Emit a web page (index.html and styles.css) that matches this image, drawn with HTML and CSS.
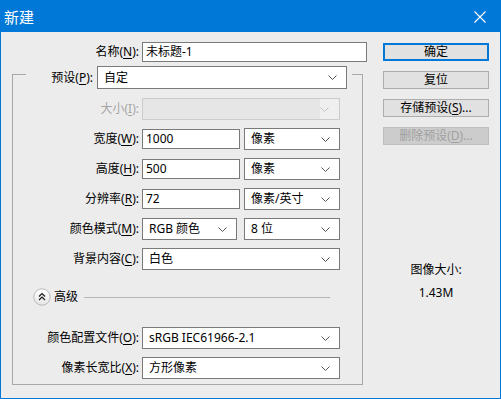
FILE: index.html
```html
<!DOCTYPE html>
<html lang="zh-CN">
<head>
<meta charset="utf-8">
<title>新建</title>
<link rel="stylesheet" href="styles.css">
</head>
<body>
<div class="win">
  <div class="titlebar">
    <span class="title">新建</span>
    <svg class="close" width="12" height="12" viewBox="0 0 12 12"><path d="M0.5 0.5 L11.5 11.5 M11.5 0.5 L0.5 11.5" stroke="#fff" stroke-width="1.1" fill="none"/></svg>
  </div>
  <div class="content">
    <div class="left">
      <div class="row name-row">
        <span class="lbl lbl-name">名称(<u>N</u>):</span>
        <div class="input w-name">未标题-1</div>
      </div>
      <div class="group">
        <div class="legend-row">
          <span class="lbl-preset">预设(<u>P</u>):</span>
          <div class="select w-preset"><span>自定</span><svg class="chev" width="9" height="5" viewBox="0 0 9 5"><polyline points="0.5,0.5 4.5,4.5 8.5,0.5" fill="none" stroke="#555" stroke-width="1"/></svg></div>
        </div>
        <div class="row first">
          <span class="lbl disabled">大小(<u>I</u>):</span>
          <div class="select w-full is-disabled"><span></span><span class="dis-arrow"><svg class="chev" width="9" height="5" viewBox="0 0 9 5"><polyline points="0.5,0.5 4.5,4.5 8.5,0.5" fill="none" stroke="#c4c4c4" stroke-width="1"/></svg></span></div>
        </div>
        <div class="row">
          <span class="lbl">宽度(<u>W</u>):</span>
          <div class="input w-num">1000</div>
          <div class="select w-unit"><span>像素</span><svg class="chev" width="9" height="5" viewBox="0 0 9 5"><polyline points="0.5,0.5 4.5,4.5 8.5,0.5" fill="none" stroke="#555" stroke-width="1"/></svg></div>
        </div>
        <div class="row">
          <span class="lbl">高度(<u>H</u>):</span>
          <div class="input w-num">500</div>
          <div class="select w-unit"><span>像素</span><svg class="chev" width="9" height="5" viewBox="0 0 9 5"><polyline points="0.5,0.5 4.5,4.5 8.5,0.5" fill="none" stroke="#555" stroke-width="1"/></svg></div>
        </div>
        <div class="row">
          <span class="lbl">分辨率(<u>R</u>):</span>
          <div class="input w-num">72</div>
          <div class="select w-unit"><span>像素/英寸</span><svg class="chev" width="9" height="5" viewBox="0 0 9 5"><polyline points="0.5,0.5 4.5,4.5 8.5,0.5" fill="none" stroke="#555" stroke-width="1"/></svg></div>
        </div>
        <div class="row">
          <span class="lbl">颜色模式(<u>M</u>):</span>
          <div class="select w-mode"><span>RGB 颜色</span><svg class="chev" width="9" height="5" viewBox="0 0 9 5"><polyline points="0.5,0.5 4.5,4.5 8.5,0.5" fill="none" stroke="#555" stroke-width="1"/></svg></div>
          <div class="select w-unit"><span>8 位</span><svg class="chev" width="9" height="5" viewBox="0 0 9 5"><polyline points="0.5,0.5 4.5,4.5 8.5,0.5" fill="none" stroke="#555" stroke-width="1"/></svg></div>
        </div>
        <div class="row">
          <span class="lbl">背景内容(<u>C</u>):</span>
          <div class="select w-full"><span>白色</span><svg class="chev" width="9" height="5" viewBox="0 0 9 5"><polyline points="0.5,0.5 4.5,4.5 8.5,0.5" fill="none" stroke="#555" stroke-width="1"/></svg></div>
        </div>
        <div class="adv-row">
          <svg class="adv-btn" width="18" height="18" viewBox="0 0 18 18">
            <defs><linearGradient id="g" x1="0" y1="0" x2="0" y2="1"><stop offset="0" stop-color="#ffffff"/><stop offset="1" stop-color="#e6e6e6"/></linearGradient></defs>
            <circle cx="9" cy="9" r="8.2" fill="url(#g)" stroke="#b8b8b8" stroke-width="1"/>
            <polyline points="6,8.5 9,5.5 12,8.5" fill="none" stroke="#1a1a1a" stroke-width="1.2"/>
            <polyline points="6,12 9,9 12,12" fill="none" stroke="#1a1a1a" stroke-width="1.2"/>
          </svg>
          <span class="adv-lbl">高级</span>
          <span class="adv-line"></span>
        </div>
        <div class="row adv-first">
          <span class="lbl">颜色配置文件(<u>O</u>):</span>
          <div class="select w-full"><span>sRGB IEC61966-2.1</span><svg class="chev" width="9" height="5" viewBox="0 0 9 5"><polyline points="0.5,0.5 4.5,4.5 8.5,0.5" fill="none" stroke="#555" stroke-width="1"/></svg></div>
        </div>
        <div class="row">
          <span class="lbl">像素长宽比(<u>X</u>):</span>
          <div class="select w-full"><span>方形像素</span><svg class="chev" width="9" height="5" viewBox="0 0 9 5"><polyline points="0.5,0.5 4.5,4.5 8.5,0.5" fill="none" stroke="#555" stroke-width="1"/></svg></div>
        </div>
      </div>
    </div>
    <div class="right">
      <div class="btn default">确定</div>
      <div class="btn">复位</div>
      <div class="btn">存储预设(<u>S</u>)...</div>
      <div class="btn btn-disabled">删除预设(<u>D</u>)...</div>
      <div class="info">
        <div class="info-line">图像大小:</div>
        <div class="info-line">1.43M</div>
      </div>
    </div>
  </div>
</div>
</body>
</html>
```

FILE: styles.css
```css
* { box-sizing: border-box; }
html, body { margin: 0; padding: 0; }
body {
  font-family: "Noto Sans", "Noto Sans CJK SC", sans-serif;
  font-size: 12px;
  color: #000;
  background: #ececec;
}
u { text-decoration: underline; text-underline-offset: 2px; }

.win {
  width: 501px;
  height: 399px;
  border: 1px solid #0078d7;
  background: #ececec;
  display: flex;
  flex-direction: column;
}
.titlebar {
  height: 31px;
  flex: none;
  background: #0078d7;
  color: #fff;
  display: flex;
  align-items: center;
  justify-content: space-between;
  padding-left: 3px;
  padding-right: 14px;
}
.title {
  font-family: "Noto Sans CJK SC", sans-serif;
  font-size: 15px;
  line-height: 31px;
}
.close { display: block; margin-top: 1px; }

.content {
  display: flex;
  padding: 10px 0 0 11px;
}
.left { width: 356px; flex: none; }
.right {
  width: 106px;
  margin-left: 15px;
  padding-top: 1px;
  display: flex;
  flex-direction: column;
  gap: 10px;
}

.row {
  display: flex;
  align-items: center;
  height: 22px;
  margin-top: 8px;
  line-height: 16px;
}
.name-row { height: 20px; margin-top: 0; }
.lbl {
  width: 126px;
  margin-right: 3px;
  text-align: right;
  white-space: nowrap;
}
.lbl-name { width: 127px; }
.disabled { color: #a6a6a6; }

.input {
  height: 20px;
  border: 1px solid #7a7a7a;
  background: #fff;
  padding-left: 3px;
  line-height: 18px;
  white-space: nowrap;
}
.select {
  height: 22px;
  border: 1px solid #7a7a7a;
  background: #fff;
  padding-left: 6px;
  padding-right: 9px;
  display: flex;
  align-items: center;
  justify-content: space-between;
  line-height: 20px;
  white-space: nowrap;
}
.chev { display: block; flex: none; }
.select.is-disabled {
  border-color: #cccccc;
  background: #e6e6e6;
  padding-right: 0;
}
.dis-arrow {
  width: 19px;
  height: 20px;
  background: #efefef;
  display: flex;
  align-items: center;
  justify-content: flex-start;
}

.w-name { width: 225px; }
.w-num { width: 98px; margin-right: 4px; }
.w-unit { width: 96px; }
.w-mode { width: 95px; margin-right: 7px; }
.w-full { width: 198px; }
.w-preset { width: 250px; height: 23px; }

.group {
  width: 351px;
  margin-top: 12px;
  border: 1px solid #a8a8a8;
  padding-bottom: 5px;
}
.legend-row {
  margin-top: -9px;
  margin-left: 13px;
  width: 326px;
  height: 23px;
  background: #ececec;
  display: flex;
  align-items: center;
  justify-content: flex-end;
  gap: 4px;
  padding-right: 5px;
  line-height: 16px;
}
.row.first { margin-top: 9px; }

.adv-row {
  display: flex;
  align-items: center;
  height: 20px;
  margin-top: 17px;
  padding-left: 20px;
}
.adv-btn { display: block; flex: none; }
.adv-lbl {
  margin-left: 3px;
  font-size: 12px;
  line-height: 16px;
}
.adv-line {
  width: 246px;
  height: 1px;
  margin-left: 6px;
  background: #b4b4b4;
}
.row.adv-first { margin-top: 20px; }

.btn {
  height: 18px;
  border: 1px solid #adadad;
  background: #e1e1e1;
  text-align: center;
  line-height: 16px;
  white-space: nowrap;
}
.btn.default {
  border: 2px solid #0078d7;
  line-height: 14px;
}
.btn-disabled {
  background: #cccccc;
  border-color: #bfbfbf;
  color: #a0a0a0;
}

.info {
  margin-top: 107px;
  display: flex;
  flex-direction: column;
  align-items: center;
  gap: 7px;
}
.info-line { line-height: 16px; }
```
